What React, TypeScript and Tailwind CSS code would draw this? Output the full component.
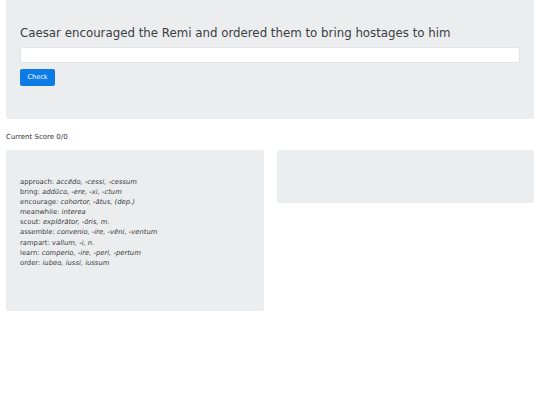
import React from 'react';

const vocab: [string, string][] = [
  ['approach', 'accēdo, -cessi, -cessum'],
  ['bring', 'addūco, -ere, -xi, -ctum'],
  ['encourage', 'cohortor, -ātus, (dep.)'],
  ['meanwhile', 'interea'],
  ['scout', 'explōrātor, -ōris, m.'],
  ['assemble', 'convenio, -ire, -vēni, -ventum'],
  ['rampart', 'vallum, -i, n.'],
  ['learn', 'comperio, -ire, -peri, -pertum'],
  ['order', 'iubeo, iussi, iussum'],
];

export default function App() {
  return (
    <div className="w-[540px] h-[405px] bg-white px-[6px] text-[#212529]" style={{ fontFamily: '"DejaVu Sans", sans-serif' }}>
      <div className="bg-[#ecedef] rounded-b-[3px] px-[14px] pt-[25px] h-[119px]">
        <h2 className="text-[11.8px] leading-[16px] text-[#3a3d40]">Caesar encouraged the Remi and ordered them to bring hostages to him</h2>
        <input className="mt-[6px] block w-full h-[16px] bg-white border border-[#e1e3e6] rounded-[2px]" />
        <button className="mt-[6px] block h-[17px] w-[35px] bg-[#0d7be6] text-white text-[6.5px] rounded-[2px]">Check</button>
      </div>
      <div className="mt-[13px] text-[7px] leading-[10px] text-[#333]">Current Score 0/0</div>
      <div className="mt-[8px] grid grid-cols-2 gap-[13px] items-start">
        <div className="bg-[#ecedef] rounded-[2px] h-[161px] px-[14px] pt-[27px]">
          {vocab.map(([en, la]) => (
            <div key={en} className="text-[6.8px] leading-[10.1px] text-[#3a3d40] whitespace-nowrap">
              {en}: <i>{la}</i>
            </div>
          ))}
        </div>
        <div className="bg-[#ecedef] rounded-[2px] h-[53px]" />
      </div>
    </div>
  );
}
